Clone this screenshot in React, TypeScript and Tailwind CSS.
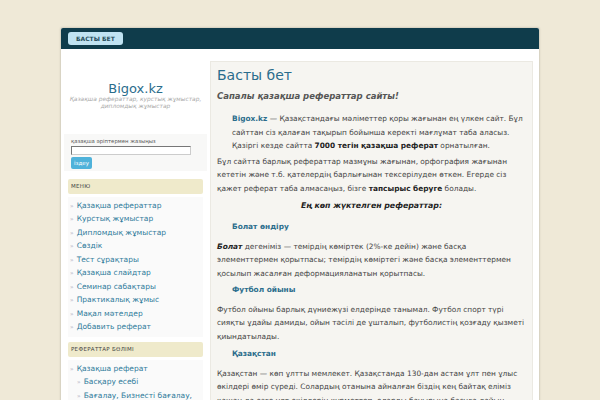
const menu = [
  "Қазақша рефераттар",
  "Курстық жұмыстар",
  "Дипломдық жұмыстар",
  "Сөздік",
  "Тест сұрақтары",
  "Қазақша слайдтар",
  "Семинар сабақтары",
  "Практикалық жұмыс",
  "Мақал мәтелдер",
  "Добавить реферат",
];

function Item({ children, sub }: { children: string; sub?: boolean }) {
  return (
    <li
      className={`flex h-[13.5px] items-center whitespace-nowrap text-[7.5px] leading-[13.5px] text-[#2f7b9a] ${
        sub ? "pl-[7px]" : ""
      }`}
    >
      <span className="mr-[3px] text-[6px] text-[#aab]">»</span>
      {children}
    </li>
  );
}

function BoxTitle({ children }: { children: string }) {
  return (
    <div className="mx-[7px] rounded-[2px] bg-[#efeacb] px-[3px] py-[4px] text-[5.5px] leading-[7px] tracking-[0.3px] text-[#444]">
      {children}
    </div>
  );
}

export default function App() {
  return (
    <div
      className="h-[400px] w-[600px] overflow-hidden bg-[#efe9d7] pt-[27px] pl-[60px] text-[#444]"
      style={{ fontFamily: '"DejaVu Sans", Verdana, sans-serif' }}
    >
      <div className="w-[480px] rounded-t-[3px] border border-[#d9d4c4] bg-white shadow-[0_0_2px_rgba(0,0,0,0.1)]">
        <nav className="flex h-[21px] items-center rounded-t-[2px] bg-[#0f3c4b] px-[7px]">
          <span className="rounded-[3px] bg-[#c0e3f2] px-[8px] py-[3px] text-[6px] leading-[7px] font-bold text-[#274e5c]">
            БАСТЫ БЕТ
          </span>
        </nav>
        <div className="flex pt-[12px]">
          <aside className="w-[149px] shrink-0">
            <div className="pt-[21px] text-center">
              <div className="text-[13px] leading-[14px] text-[#2b6d8c]">Bigox.kz</div>
              <div className="px-[2px] text-[5.9px] italic leading-[7px] text-[#aaa]">
                Қазақша рефераттар, курстық жұмыстар, дипломдық жұмыстар
              </div>
            </div>
            <div className="mx-[3px] mt-[24px] flex flex-col items-start bg-[#f8f8f7] px-[7px] pt-[4px] pb-[2px]">
              <div className="text-[5.3px] leading-[7px] text-[#555]">қазақша әріптермен жазыңыз</div>
              <div className="mt-[1px] h-[9px] w-[120px] border border-[#777] border-b-[#ccc] border-r-[#ccc] bg-white" />
              <div className="mt-[2px] rounded-[2px] bg-[#4fb2da] px-[3px] py-[2.5px] text-[5.5px] leading-[7px] text-white">
                іздеу
              </div>
            </div>
            <div className="mt-[8px]">
              <BoxTitle>МЕНЮ</BoxTitle>
            </div>
            <ul className="mx-[7px] mt-[3px] bg-[#fafafa] pt-[1.5px] pb-[3px] pl-[2px]">
              {menu.map((m) => (
                <Item key={m}>{m}</Item>
              ))}
            </ul>
            <div className="mt-[5.5px]">
              <BoxTitle>РЕФЕРАТТАР БӨЛІМІ</BoxTitle>
            </div>
            <ul className="mx-[7px] mt-[3px] bg-[#fafafa] pt-[1.5px] pl-[2px]">
              <Item>Қазақша реферат</Item>
              <Item sub>Басқару есебі</Item>
              <Item sub>Бағалау, Бизнесті бағалау,</Item>
            </ul>
          </aside>
          <main className="mr-[6px] flex-1 border border-[#ebe9e2] bg-[#f6f5f1] px-[6px] pt-[4px] text-[7.4px] leading-[13.5px]">
            <h1 className="text-[14px] leading-[18px] text-[#2b6d8c]">Басты бет</h1>
            <p className="mt-[6px] text-[8.5px] font-bold italic text-[#555]">
              Сапалы қазақша рефераттар сайты!
            </p>
            <blockquote className="mt-[8.5px] pl-[15px]">
              <b className="text-[#2b6d8c]">Bigox.kz</b> — Қазақстандағы мәліметтер қоры жағынан ең үлкен сайт. Бұл
              сайттан сіз қалаған тақырып бойынша керекті мағлұмат таба аласыз. Қазіргі кезде сайтта{" "}
              <b className="text-[#222]">7000 тегін қазақша реферат</b> орнатылған.
            </blockquote>
            <p className="mt-[2px]">
              Бұл сайтта барлық рефераттар мазмұны жағынан, орфография жағынан кететін және т.б. қателердің
              барлығынан тексерілуден өткен. Егерде сіз қажет реферат таба алмасаңыз, бізге{" "}
              <b className="text-[#222]">тапсырыс беруге</b> болады.
            </p>
            <p className="mt-[3.5px] text-center text-[7.8px] font-bold italic text-[#222]">
              Ең көп жүктелген рефераттар:
            </p>
            <h3 className="mt-[7.5px] pl-[15px] font-bold text-[#2b6d8c]">Болат өндіру</h3>
            <p className="mt-[6.5px]">
              <b className="italic text-[#222]">Болат</b> дегеніміз — темірдің көміртек (2%-ке дейін) және басқа
              элементтермен қорытпасы; темірдің көміртегі және басқа элементтермен қосылып жасалған
              деформацияланатын қорытпасы.
            </p>
            <h3 className="mt-[2.5px] pl-[15px] font-bold text-[#2b6d8c]">Футбол ойыны</h3>
            <p className="mt-[6.5px]">
              Футбол ойыны барлық дүниежүзі елдерінде танымал. Футбол спорт түрі сияқты ұдайы дамиды, ойын
              тәсілі де ұшталып, футболистің қозғаду қызметі қиындатылады.
            </p>
            <h3 className="mt-[3.5px] pl-[15px] font-bold text-[#2b6d8c]">Қазақстан</h3>
            <p className="mt-[6.5px]">
              Қазақстан — көп ұлтты мемлекет. Қазақстанда 130-дан астам ұлт пен ұлыс өкілдері өмір сүреді.
              Солардың отанына айналған біздің кең байтақ еліміз қашан да өзге ұлт өкілдерін құрметтеп,
              оларды бауырына басуға дайын.
            </p>
          </main>
        </div>
      </div>
    </div>
  );
}
